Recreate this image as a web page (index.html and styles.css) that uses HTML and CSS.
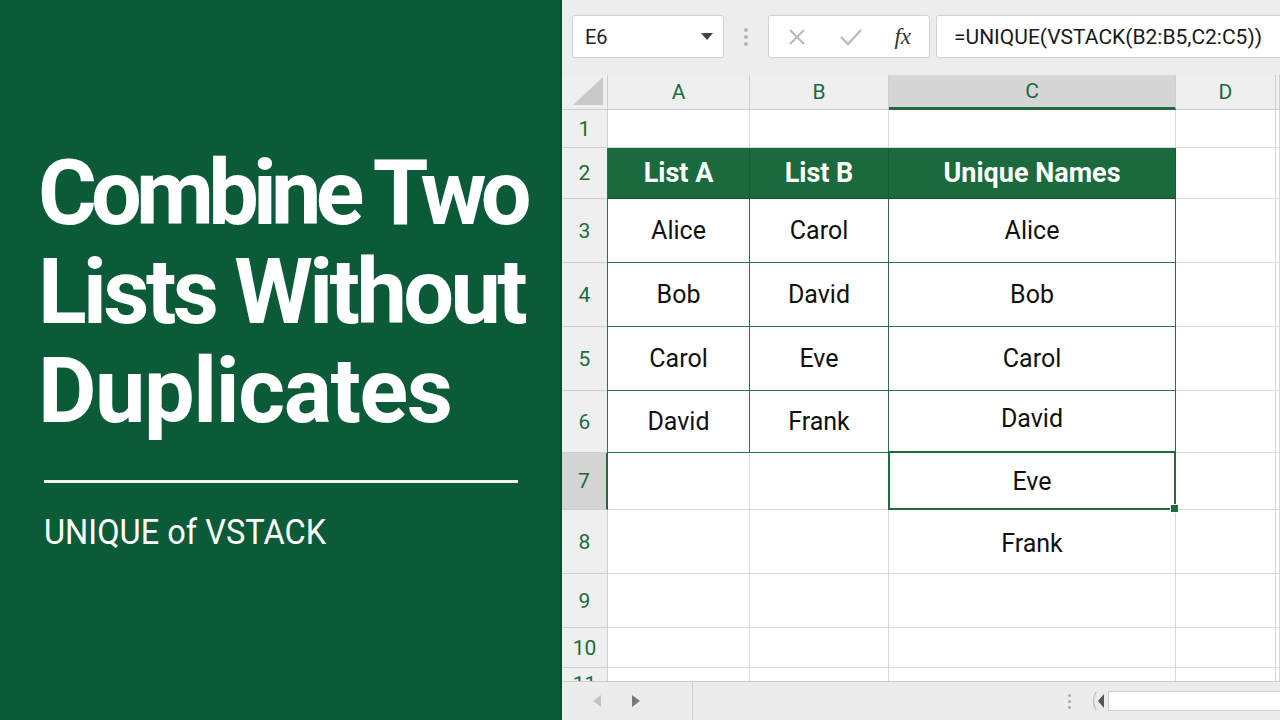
FILE: index.html
```html
<!DOCTYPE html>
<html>
<head>
<meta charset="utf-8">
<link rel="stylesheet" href="styles.css">
</head>
<body>
<div class="page">
  <section class="hero">
    <h1 class="title"><span class="l1">Combine Two</span><br><span class="l2">Lists Without</span><br><span class="l3">Duplicates</span></h1>
    <div class="rule"></div>
    <p class="sub">UNIQUE of VSTACK</p>
  </section>
  <section class="excel">
    <div class="toolbar">
      <div class="namebox">
        <span class="ref">E6</span>
        <svg class="caret" width="12" height="7" viewBox="0 0 12 7"><polygon points="0,0 12,0 6,7" fill="#444"/></svg>
      </div>
      <div class="vdots"><i></i><i></i><i></i></div>
      <div class="fbtns">
        <svg width="20" height="20" viewBox="0 0 20 20"><path d="M3 3 L17 17 M17 3 L3 17" stroke="#b8b8b8" stroke-width="2" fill="none"/></svg>
        <svg width="24" height="20" viewBox="0 0 24 20"><path d="M2 10 L9 17 L22 3" stroke="#bcbcbc" stroke-width="2.4" fill="none"/></svg>
        <span class="fx">fx</span>
      </div>
      <div class="formula">=UNIQUE(VSTACK(B2:B5,C2:C5))</div>
    </div>
    <div class="sheet">
      <div class="c corner"><svg width="30" height="28" viewBox="0 0 30 28"><polygon points="30,0 30,28 0,28" fill="#c9c9c9"/></svg></div>
      <div class="c ch">A</div>
      <div class="c ch">B</div>
      <div class="c ch sel">C</div>
      <div class="c ch">D</div>
      <div class="c ch"></div>

      <div class="c rh">1</div><div class="c"></div><div class="c"></div><div class="c"></div><div class="c"></div><div class="c"></div>

      <div class="c rh">2</div>
      <div class="c hd first">List A</div>
      <div class="c hd">List B</div>
      <div class="c hd last">Unique Names</div>
      <div class="c"></div><div class="c"></div>

      <div class="c rh">3</div>
      <div class="c tb first">Alice</div>
      <div class="c tb">Carol</div>
      <div class="c tb">Alice</div>
      <div class="c"></div><div class="c"></div>

      <div class="c rh">4</div>
      <div class="c tb first">Bob</div>
      <div class="c tb">David</div>
      <div class="c tb">Bob</div>
      <div class="c"></div><div class="c"></div>

      <div class="c rh">5</div>
      <div class="c tb first">Carol</div>
      <div class="c tb">Eve</div>
      <div class="c tb">Carol</div>
      <div class="c"></div><div class="c"></div>

      <div class="c rh">6</div>
      <div class="c tb first">David</div>
      <div class="c tb">Frank</div>
      <div class="c tb up">David</div>
      <div class="c"></div><div class="c"></div>

      <div class="c rh active">7</div>
      <div class="c"></div>
      <div class="c"></div>
      <div class="c cur">Eve</div>
      <div class="c"></div><div class="c"></div>

      <div class="c rh">8</div>
      <div class="c"></div>
      <div class="c"></div>
      <div class="c val">Frank</div>
      <div class="c"></div><div class="c"></div>

      <div class="c rh">9</div><div class="c"></div><div class="c"></div><div class="c"></div><div class="c"></div><div class="c"></div>
      <div class="c rh">10</div><div class="c"></div><div class="c"></div><div class="c"></div><div class="c"></div><div class="c"></div>
      <div class="c rh partial">11</div><div class="c"></div><div class="c"></div><div class="c"></div><div class="c"></div><div class="c"></div>
    </div>
    <div class="hscroll">
      <div class="tabnav">
        <svg width="8" height="12" viewBox="0 0 8 12"><polygon points="8,0 8,12 0,6" fill="#c4c4c4"/></svg>
        <svg width="8" height="12" viewBox="0 0 8 12"><polygon points="0,0 0,12 8,6" fill="#777"/></svg>
      </div>
      <div class="spacer"></div>
      <div class="vdots small"><i></i><i></i><i></i></div>
      <svg class="chev" width="20" height="24" viewBox="0 0 20 24"><path d="M8 3 Q3 12 8 21" stroke="#c4c4c4" stroke-width="1.5" fill="none"/><polygon points="16,5 16,19 10,12" fill="#555"/></svg>
      <div class="thumb"></div>
    </div>
  </section>
</div>
</body>
</html>
```
FILE: styles.css
```css
* { box-sizing: border-box; }
html, body { margin: 0; padding: 0; }
body { width: 1280px; height: 720px; overflow: hidden; font-family: Roboto, "Liberation Sans", sans-serif; }

.page { display: flex; width: 1280px; height: 720px; }

.hero {
  width: 562px;
  flex: none;
  background: #0b5b38;
  color: #fff;
  padding: 144px 0 0 38px;
  border-right: 2px solid #0a4f30;
}
.title {
  margin: 0;
  font-family: Roboto, "Liberation Sans", sans-serif;
  font-weight: 700;
  font-size: 90px;
  line-height: 99px;
  white-space: nowrap;
}
.l1 { letter-spacing: -5.8px; }
.l2 { letter-spacing: -3.6px; }
.l3 { letter-spacing: -1.4px; }
.rule {
  margin: 39px 0 0 6px;
  width: 474px;
  height: 3px;
  background: #f2f2f2;
}
.sub {
  margin: 30px 0 0 6px;
  font-family: Roboto, "Liberation Sans", sans-serif;
  font-size: 35px;
  line-height: 40px;
  white-space: nowrap;
  transform: scaleX(0.93);
  transform-origin: left center;
}

.excel { flex: 1; display: flex; flex-direction: column; background: #efefef; overflow: hidden; }

.toolbar {
  height: 75px;
  flex: none;
  display: flex;
  align-items: flex-start;
  padding: 15px 0 0 10px;
  background: #ededed;
}
.namebox {
  width: 152px;
  height: 43px;
  background: #fff;
  border: 1px solid #d2d2d2;
  border-radius: 3px;
  display: flex;
  align-items: center;
  justify-content: space-between;
  padding: 0 10px 0 12px;
}
.ref { font-size: 20px; color: #222; }
.vdots { width: 44px; height: 43px; display: flex; flex-direction: column; align-items: center; justify-content: center; gap: 3px; }
.vdots i { display: block; width: 4px; height: 4px; border-radius: 50%; background: #b5b5b5; }
.fbtns {
  width: 162px;
  height: 43px;
  background: #fff;
  border: 1px solid #d2d2d2;
  border-radius: 3px;
  display: flex;
  align-items: center;
  justify-content: space-between;
  padding: 0 18px 0 18px;
}
.fx { font-family: "Liberation Serif", serif; font-style: italic; font-size: 23px; color: #333; }
.formula {
  flex: 1;
  height: 43px;
  margin-left: 6px;
  margin-right: -6px;
  background: #fff;
  border: 1px solid #d2d2d2;
  border-radius: 3px;
  display: flex;
  align-items: center;
  padding-left: 17px;
  font-size: 21px;
  color: #1a1a1a;
  white-space: nowrap;
}

.sheet {
  flex: 1;
  display: grid;
  grid-template-columns: 46px 142px 139px 287px 100px 1fr;
  grid-template-rows: 35px 38px 51px 64px 64px 64px 62px 57px 64px 54px 40px 30px;
  background: #fff;
  overflow: hidden;
}
.c {
  border-right: 1px solid #d9d9d9;
  border-bottom: 1px solid #d9d9d9;
  display: flex;
  align-items: center;
  justify-content: center;
  font-size: 25px;
  color: #111;
  position: relative;
}
.corner { background: #efefef; border-color: #cfcfcf; justify-content: flex-end; align-items: flex-end; padding: 0 4px 4px 0; }
.ch { background: #efefef; border-color: #cfcfcf; color: #1c6a3c; font-size: 21px; }
.ch.sel { background: #d6d6d6; border-bottom: 3px solid #1f6b3d; }
.rh { background: #efefef; border-color: #cfcfcf; color: #1c6a3c; font-size: 21px; }
.rh.active { background: #d5d5d5; border-right: 2px solid #1f6b3d; }
.rh.partial { align-items: flex-start; padding-top: 4px; }

.hd {
  background: #1a6a3d;
  color: #fff;
  font-weight: 700;
  font-size: 27px;
  border-right: 1px solid #155a34;
  border-bottom: 1px solid #124f2e;
}
.tb { border-right: 1.5px solid #2f6e4a; border-bottom: 1.5px solid #2f6e4a; }
.first { box-shadow: -1px 0 0 #2f6e4a; }
.up { padding-bottom: 6px; }
.cur::after {
  content: "";
  position: absolute;
  left: -1px; top: -2px; right: -1px; bottom: -1px;
  border: 2px solid #1f6b3d;
  pointer-events: none;
}
.cur::before {
  content: "";
  position: absolute;
  right: -4px; bottom: -4px;
  width: 7px; height: 7px;
  background: #1f6b3d;
  border: 1px solid #fff;
  z-index: 2;
}
.val { padding-top: 4px; }

.hscroll {
  height: 39px;
  flex: none;
  border-top: 1px solid #cdcdcd;
  background: #ececec;
  display: flex;
  align-items: center;
}
.tabnav {
  width: 131px;
  height: 100%;
  border-right: 1px solid #cfcfcf;
  display: flex;
  align-items: center;
  gap: 31px;
  padding-left: 31px;
}
.spacer { flex: 1; }
.vdots.small { width: 10px; height: 20px; gap: 3px; }
.vdots.small i { width: 3px; height: 3px; background: #a8a8a8; }
.chev { margin-left: 14px; }
.thumb {
  width: 174px;
  height: 20px;
  background: #fff;
  border: 1px solid #cfcfcf;
  border-right: none;
  margin-right: -2px;
}
```
